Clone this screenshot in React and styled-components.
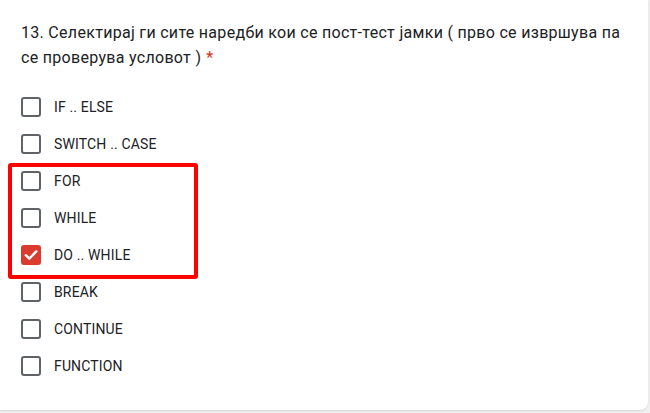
import React from "react";
import styled, { createGlobalStyle } from "styled-components";

const Global = createGlobalStyle`
  html, body { margin: 0; padding: 0; }
  body {
    background: #f1f1f1;
    font-family: Roboto, "Noto Sans", Arial, sans-serif;
    color: #202124;
    width: 650px;
    height: 413px;
    overflow: hidden;
  }
`;

const Card = styled.div`
  width: 648px;
  box-sizing: border-box;
  background: #fff;
  border-radius: 0 0 8px 0;
  box-shadow: 0 1px 2px rgba(60, 64, 67, 0.15);
  padding: 21px 20px 25px 21px;
`;

const Question = styled.div`
  font-size: 16px;
  line-height: 24.5px;
  letter-spacing: 0.3px;
  color: #202124;
`;

const Required = styled.span`
  color: #d93025;
  margin-left: 5px;
`;

const List = styled.div`
  margin-top: 18px;
  display: flex;
  flex-direction: column;
`;

const Highlight = styled.div`
  position: relative;
  &::after {
    content: "";
    position: absolute;
    left: -13px;
    top: 1px;
    width: 190px;
    height: 116px;
    box-sizing: border-box;
    border: 4px solid #ff0000;
    border-radius: 3px;
    pointer-events: none;
  }
`;

const Row = styled.label`
  display: flex;
  align-items: center;
  gap: 13px;
  height: 37.1px;
`;

const Box = styled.span`
  width: 20px;
  height: 20px;
  box-sizing: border-box;
  border-radius: 3px;
  border: ${(p) => (p.$checked ? "none" : "2px solid #5f6368")};
  background: ${(p) => (p.$checked ? "#db3b2f" : "#fff")};
  display: flex;
  align-items: center;
  justify-content: center;
  flex: none;
`;

const Label = styled.span`
  font-size: 14px;
  color: #202124;
  letter-spacing: 0.15px;
`;

const Check = () => (
  <svg width="14" height="12" viewBox="0 0 14 12">
    <path d="M1.8 6.2 L5.3 9.6 L12.3 2.4" fill="none" stroke="#fff" strokeWidth="2.4" strokeLinecap="round" strokeLinejoin="round" />
  </svg>
);

const Option = ({ label, checked }) => (
  <Row>
    <Box $checked={checked}>{checked && <Check />}</Box>
    <Label>{label}</Label>
  </Row>
);

export default function App() {
  return (
    <>
      <Global />
      <Card>
        <Question>
          13. Селектирај ги сите наредби кои се пост-тест јамки ( прво се извршува па се проверува условот )
          <Required>*</Required>
        </Question>
        <List>
          <Option label="IF .. ELSE" />
          <Option label="SWITCH .. CASE" />
          <Highlight>
            <Option label="FOR" />
            <Option label="WHILE" />
            <Option label="DO .. WHILE" checked />
          </Highlight>
          <Option label="BREAK" />
          <Option label="CONTINUE" />
          <Option label="FUNCTION" />
        </List>
      </Card>
    </>
  );
}
